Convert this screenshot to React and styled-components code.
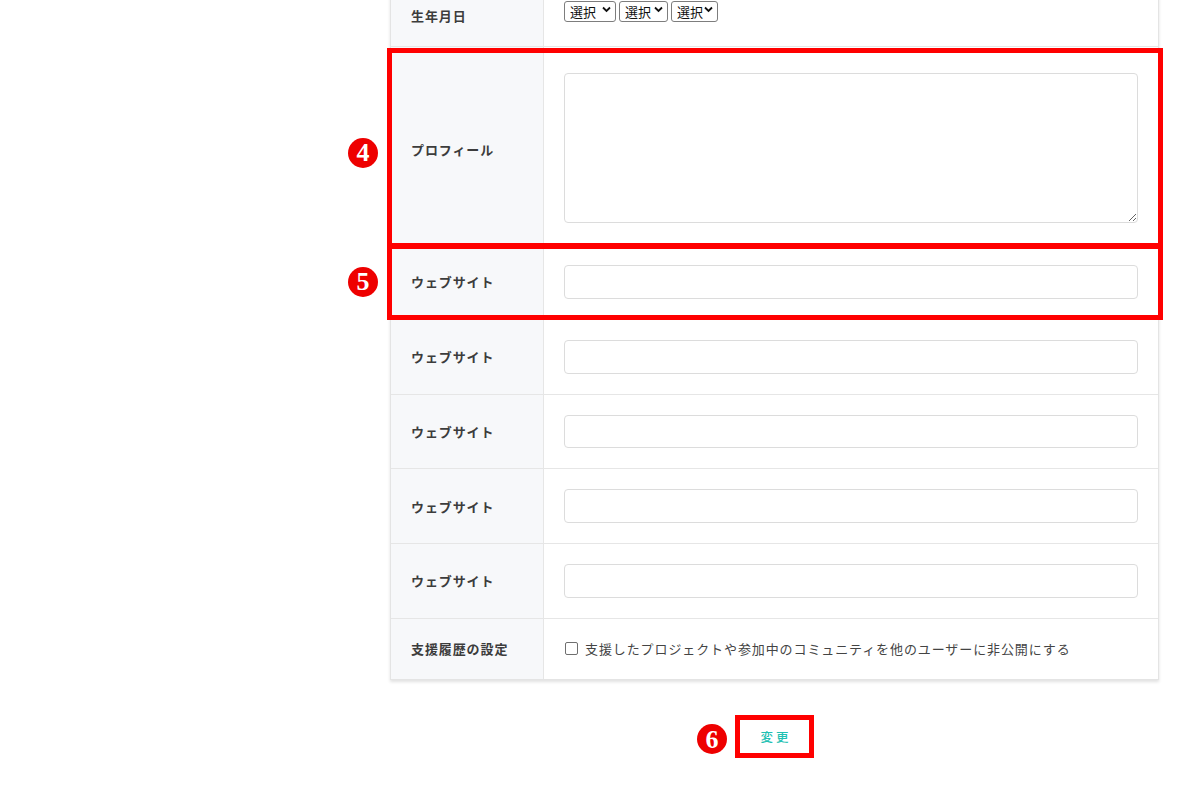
import React from "react"
import styled, { createGlobalStyle } from "styled-components"

const GlobalStyle = createGlobalStyle`
    body{
        margin: 0;
        background: #fff;
        font-family: "Noto Sans CJK JP", "Noto Sans", sans-serif;
        color: #333;
    }
`

const Main = styled.main`
    margin: -15px 0 0 390px;
    width: 769px;
`

const Table = styled.div`
    border: 1px solid #e4e4e4;
    border-top: none;
    box-shadow: 0 2px 3px rgba(0, 0, 0, 0.12);
`

const Row = styled.div`
    position: relative;
    display: grid;
    grid-template-columns: 153px 1fr;
    border-bottom: 1px solid #e6e6e6;
    &:last-of-type{
        border-bottom: none;
    }
`

const Label = styled.div`
    display: flex;
    align-items: center;
    padding: 0 20px;
    padding-top: ${p => p.$shift || 0}px;
    background: #f7f8fa;
    border-right: 1px solid #e6e6e6;
    font-size: 13px;
    font-weight: 700;
    letter-spacing: 0.9px;
    color: #3c3c3c;
`

const Value = styled.div`
    padding: ${p => p.$pad || "20px"};
    display: flex;
    align-items: center;
`

const Frame = styled.span`
    position: absolute;
    inset: ${p => p.$inset};
    border: 5px solid #ff0000;
    pointer-events: none;
    z-index: 2;
`

const Badge = styled.span`
    position: absolute;
    left: ${p => p.$left}px;
    top: calc(50% + ${p => p.$dy || 0}px);
    transform: translateY(-50%);
    width: 30px;
    height: 30px;
    border-radius: 50%;
    background: #ee0000;
    color: #fff;
    display: flex;
    align-items: center;
    justify-content: center;
    font-family: "Liberation Serif", "DejaVu Serif", serif;
    font-weight: 700;
    font-size: 26px;
    line-height: 1;
    padding-top: 1px;
    box-sizing: border-box;
`

const Selects = styled.div`
    display: flex;
    gap: 3px;
`

const SelectWrap = styled.span`
    position: relative;
    display: inline-block;
    width: ${p => p.$w}px;
    height: 21px;
    svg{
        position: absolute;
        right: 5px;
        top: 50%;
        margin-top: -3px;
        pointer-events: none;
    }
`

const Select = styled.select`
    appearance: none;
    width: 100%;
    height: 100%;
    box-sizing: border-box;
    border: 1px solid #7d7d7d;
    border-radius: 3px;
    background: #fff;
    padding: 0 0 0 5px;
    font-family: "Noto Sans CJK JP", sans-serif;
    font-size: 13px;
    line-height: 19px;
    color: #111;
`

const TextArea = styled.textarea`
    display: block;
    width: 100%;
    height: 150px;
    box-sizing: border-box;
    border: 1px solid #dcdcdc;
    border-radius: 4px;
    padding: 8px 10px;
    font-family: inherit;
    font-size: 13px;
    outline: none;
`

const Input = styled.input`
    display: block;
    width: 100%;
    height: 33.75px;
    box-sizing: border-box;
    border: 1px solid #dcdcdc;
    border-radius: 4px;
    padding: 0 10px;
    font-family: inherit;
    font-size: 13px;
    outline: none;
`

const Check = styled.label`
    display: flex;
    align-items: center;
    gap: 7px;
    font-size: 13px;
    letter-spacing: 0.9px;
    color: #444;
    line-height: 21px;
    input{
        appearance: none;
        margin: 0 0 0 1px;
        width: 13px;
        height: 13px;
        border: 1px solid #6f6f6f;
        border-radius: 2px;
        background: #fff;
    }
`

const Actions = styled.div`
    display: flex;
    justify-content: center;
    padding: 35px 0 30px;
`

const ButtonWrap = styled.div`
    position: relative;
`

const Button = styled.button`
    width: 79px;
    height: 43px;
    border: none;
    background: #fff;
    color: #1fc1b3;
    font-family: "Noto Sans CJK JP", sans-serif;
    font-size: 12.5px;
    font-weight: 500;
    letter-spacing: 3px;
    padding: 0 0 0 3px;
    cursor: pointer;
`

const Chevron = () =>
    <svg width="9" height="7" viewBox="0 0 9 7">
        <path d="M1 1.5 L4.5 5 L8 1.5" fill="none" stroke="#111" strokeWidth="1.8" />
    </svg>

const DateSelect = ({ w }) =>
    <SelectWrap $w={w}>
        <Select defaultValue="">
            <option value="">選択</option>
        </Select>
        <Chevron />
    </SelectWrap>

const WebsiteRow = ({ mark }) =>
    <Row>
        <Label>ウェブサイト</Label>
        <Value $pad="20px 20px 20px">
            <Input type="text" />
        </Value>
        {mark && <Frame $inset="-1px -5px -1px -4px" />}
        {mark && <Badge $left={-43}>5</Badge>}
    </Row>

const App = () =>
    <>
        <GlobalStyle />
        <Main>
            <Table>
                <Row>
                    <Label>生年月日</Label>
                    <Value $pad="13px 20px 27px">
                        <Selects>
                            <DateSelect w={52} />
                            <DateSelect w={49} />
                            <DateSelect w={47} />
                        </Selects>
                    </Value>
                </Row>
                <Row>
                    <Label $shift={8}>プロフィール</Label>
                    <Value $pad="26px 20px 21px">
                        <TextArea />
                    </Value>
                    <Frame $inset="1px -5px -4px -4px" />
                    <Badge $left={-43} $dy={7}>4</Badge>
                </Row>
                <WebsiteRow mark />
                <WebsiteRow />
                <WebsiteRow />
                <WebsiteRow />
                <WebsiteRow />
                <Row>
                    <Label>支援履歴の設定</Label>
                    <Value $pad="19px 20px 20px">
                        <Check>
                            <input type="checkbox" />
                            支援したプロジェクトや参加中のコミュニティを他のユーザーに非公開にする
                        </Check>
                    </Value>
                </Row>
            </Table>
            <Actions>
                <ButtonWrap>
                    <Button type="button">変更</Button>
                    <Frame $inset="0" />
                    <Badge $left={-38} $dy={3}>6</Badge>
                </ButtonWrap>
            </Actions>
        </Main>
    </>

export default App
